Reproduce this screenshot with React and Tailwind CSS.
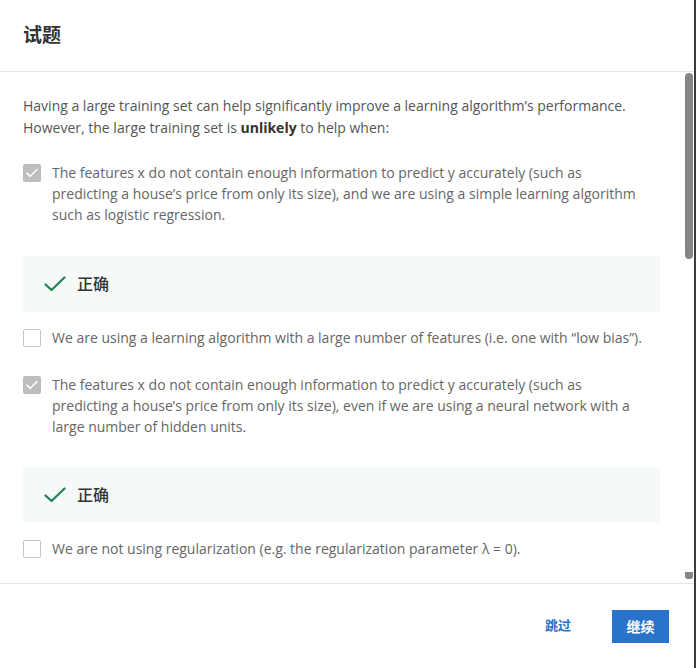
import React from "react";

const font = { fontFamily: '"Open Sans", "Noto Sans CJK SC", sans-serif' };

function CheckBox({ checked }) {
  if (checked) {
    return (
      <div className="mt-[2px] flex h-[18px] w-[18px] shrink-0 items-center justify-center rounded-[2px] bg-[#bdbdbd]">
        <svg width="12" height="10" viewBox="0 0 12 10" fill="none">
          <path d="M1 5.2 L4.3 8.3 L11 1.5" stroke="#fff" strokeWidth="1.6" strokeLinecap="round" strokeLinejoin="round" />
        </svg>
      </div>
    );
  }
  return <div className="mt-[2px] h-[18px] w-[18px] shrink-0 rounded-[2px] border-[1.5px] border-[#c4c4c4] bg-white" />;
}

function Option({ checked, children, className = "" }) {
  return (
    <div className={"flex gap-[11px] " + className}>
      <CheckBox checked={checked} />
      <p className="mr-[15px] text-[14px] leading-[21px] text-[#666]">{children}</p>
    </div>
  );
}

function Correct({ className = "" }) {
  return (
    <div className={"flex h-[56px] items-center gap-[11px] bg-[#f5f9f8] pl-[21px] " + className}>
      <svg width="22" height="16" viewBox="0 0 22 16" fill="none">
        <path d="M1.5 8.5 L7.5 14 L20.5 1.5" stroke="#1f8354" strokeWidth="2.2" strokeLinecap="round" strokeLinejoin="round" />
      </svg>
      <span className="text-[16px] font-medium text-[#333]">正确</span>
    </div>
  );
}

export default function App() {
  return (
    <div style={font} className="relative flex h-[668px] w-[696px] flex-col border-r-2 border-[#3a3a3a] bg-white">
      <div className="flex h-[72px] shrink-0 items-center border-b border-[#e3e3e3] pl-[23px]">
        <h1 className="text-[19px] font-bold text-[#333]">试题</h1>
      </div>
      <div className="relative flex-1 overflow-hidden">
        <div className="pl-[23px] pr-[34px] pt-[23px]">
          <p className="text-[14px] leading-[22px] text-[#555]">
            Having a large training set can help significantly improve a learning algorithm’s performance. However, the large training set is <b className="font-bold text-[#333]">unlikely</b> to help when:
          </p>
          <Option checked className="mt-[23px]">
            The features x do not contain enough information to predict y accurately (such as predicting a house’s price from only its size), and we are using a simple learning algorithm such as logistic regression.
          </Option>
          <Correct className="mt-[31px]" />
          <Option className="mt-[15px]">
            We are using a learning algorithm with a large number of features (i.e. one with “low bias”).
          </Option>
          <Option checked className="mt-[26px]">
            The features x do not contain enough information to predict y accurately (such as predicting a house’s price from only its size), even if we are using a neural network with a large number of hidden units.
          </Option>
          <Correct className="mt-[30px]" />
          <Option className="mt-[15px]">
            We are not using regularization (e.g. the regularization parameter λ = 0).
          </Option>
        </div>
        <div className="absolute right-[1px] top-[1px] h-[186px] w-[8px] rounded-[4px] bg-[#858585]" />
        <div className="absolute bottom-[4px] right-[1px] h-[7px] w-[8px] rounded-b-[3px] bg-[#858585]" />
      </div>
      <div className="flex h-[85px] shrink-0 items-center justify-end gap-[41px] border-t border-[#e3e3e3] pr-[25px]">
        <button className="text-[13px] font-bold text-[#2a73cc]">跳过</button>
        <button className="h-[33px] w-[57px] bg-[#2a73cc] text-[14px] font-bold text-white">继续</button>
      </div>
    </div>
  );
}
